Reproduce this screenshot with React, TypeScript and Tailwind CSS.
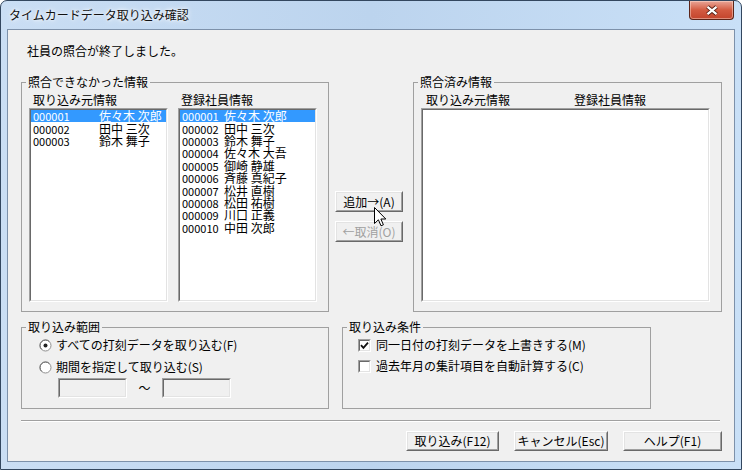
import React from 'react';

const unmatched = [
  ['000001', '佐々木 次郎'],
  ['000002', '田中 三次'],
  ['000003', '鈴木 舞子'],
];

const employees = [
  ['000001', '佐々木 次郎'],
  ['000002', '田中 三次'],
  ['000003', '鈴木 舞子'],
  ['000004', '佐々木 大吾'],
  ['000005', '御崎 静雄'],
  ['000006', '斉藤 真紀子'],
  ['000007', '松井 直樹'],
  ['000008', '松田 祐樹'],
  ['000009', '川口 正義'],
  ['000010', '中田 次郎'],
];

function Sunken({ className, inner, children }: { className: string; inner: string; children?: React.ReactNode }) {
  return (
    <div className={`border border-t-[#a0a0a0] border-l-[#a0a0a0] border-r-white border-b-white ${className}`}>
      <div className={`h-full border border-t-[#696969] border-l-[#696969] border-r-[#e3e3e3] border-b-[#e3e3e3] ${inner}`}>
        {children}
      </div>
    </div>
  );
}

function Btn({ label, className, disabled }: { label: string; className: string; disabled?: boolean }) {
  return (
    <div className={`border border-t-white border-l-white border-r-[#696969] border-b-[#696969] bg-[#f0f0f0] ${className}`}>
      <div
        className={`h-full flex items-center justify-center border border-t-[#e3e3e3] border-l-[#e3e3e3] border-r-[#a0a0a0] border-b-[#a0a0a0] ${
          disabled ? 'text-[#a0a0a0]' : 'text-black'
        }`}
      >
        {label}
      </div>
    </div>
  );
}

function Radio({ checked }: { checked?: boolean }) {
  return (
    <svg width="13" height="13" viewBox="0 0 13 13" className="shrink-0">
      <circle cx="6.5" cy="6.5" r="5.5" fill="#fff" stroke="#8f8f8f" />
      <path d="M2.6 10.4 A5.5 5.5 0 0 1 10.4 2.6" fill="none" stroke="#6a6a6a" />
      {checked && <circle cx="6.5" cy="6.5" r="2" fill="#222" />}
    </svg>
  );
}

function Check({ checked }: { checked?: boolean }) {
  return (
    <Sunken className="w-[13px] h-[13px] shrink-0" inner="bg-white flex items-center justify-center">
      {checked && (
        <svg width="9" height="9" viewBox="0 0 9 9">
          <path d="M1 4.2 L3.4 6.8 L8 1.6" fill="none" stroke="#111" strokeWidth="1.8" />
        </svg>
      )}
    </Sunken>
  );
}

function Row({ code, name, codeW, selected }: { code: string; name: string; codeW: string; selected?: boolean }) {
  return (
    <div className={`flex items-center h-[12.4px] leading-[12px] pl-[2px] whitespace-nowrap ${selected ? 'bg-[#3399ff] text-white' : ''}`}>
      <span className={`${codeW} shrink-0 text-[11px]`}>{code}</span>
      <span>{name}</span>
    </div>
  );
}

export default function App() {
  return (
    <div className="w-[742px] h-[470px] flex flex-col rounded-t-[7px] border border-[#33475f] bg-gradient-to-r from-[#cadef4] via-[#bcd4ee] to-[#c9e0f7] overflow-hidden font-['Noto_Sans_CJK_JP',sans-serif] text-[12px] leading-[12px] text-black">
      {/* title bar */}
      <div className="h-[28px] shrink-0 flex items-start justify-between">
        <div className="pl-[8px] pt-[7px] leading-[14px] text-[12px] text-[#111] [text-shadow:0_0_6px_#ffffff,0_0_3px_#ffffff]">
          タイムカードデータ取り込み確認
        </div>
        <div className="mr-[7px] w-[45px] h-[19px] rounded-b-[4px] border border-t-0 border-[#5b2418] bg-gradient-to-b from-[#e8a597] via-[#d35b41] to-[#c3442c] shadow-[inset_0_0_0_1px_rgba(255,230,220,0.45)] flex items-center justify-center">
          <svg width="14" height="11" viewBox="0 0 14 11">
            <path d="M2.5 1.8 L11.5 9.2 M11.5 1.8 L2.5 9.2" stroke="#4d1a10" strokeWidth="4" />
            <path d="M2.5 1.8 L11.5 9.2 M11.5 1.8 L2.5 9.2" stroke="#ffffff" strokeWidth="2.2" />
          </svg>
        </div>
      </div>

      {/* client area */}
      <div className="relative flex-1 ml-[6px] mr-[6px] mb-[7px] border border-[#7d91aa] bg-[#f0f0f0] flex flex-col">
        <div className="pt-[15px] pl-[19px]">社員の照合が終了しました。</div>

        <div className="mt-[19px] pl-[13px] flex items-start">
          <fieldset className="w-[308px] h-[236px] border border-[#a0a0a0]">
            <legend className="ml-[4px] px-[2px] leading-[12px]">照合できなかった情報</legend>
            <div className="mt-[6px] ml-[7px] flex gap-[10px]">
              <div className="flex flex-col">
                <div className="pl-[4px] h-[14px]">取り込み元情報</div>
                <Sunken className="w-[139px] h-[194px]" inner="bg-white">
                  {unmatched.map(([c, n], i) => (
                    <Row key={c} code={c} name={n} codeW="w-[66px]" selected={i === 0} />
                  ))}
                </Sunken>
              </div>
              <div className="flex flex-col">
                <div className="pl-[3px] h-[14px]">登録社員情報</div>
                <Sunken className="w-[139px] h-[194px]" inner="bg-white">
                  {employees.map(([c, n], i) => (
                    <Row key={c} code={c} name={n} codeW="w-[42px]" selected={i === 0} />
                  ))}
                </Sunken>
              </div>
            </div>
          </fieldset>

          <div className="ml-[6px] mt-[115px] flex flex-col gap-[9px]">
            <Btn label="追加→(A)" className="w-[68px] h-[21px]" />
            <Btn label="←取消(O)" className="w-[68px] h-[21px]" disabled />
          </div>

          <fieldset className="ml-[10px] w-[309px] h-[236px] border border-[#a0a0a0]">
            <legend className="ml-[4px] px-[2px] leading-[12px]">照合済み情報</legend>
            <div className="mt-[6px] ml-[7px] flex flex-col">
              <div className="flex h-[14px] pl-[5px]">
                <span className="w-[148px]">取り込み元情報</span>
                <span>登録社員情報</span>
              </div>
              <Sunken className="w-[289px] h-[194px]" inner="bg-white" />
            </div>
          </fieldset>
        </div>

        <div className="mt-[9px] pl-[13px] flex items-start gap-[13px]">
          <fieldset className="w-[308px] h-[88px] border border-[#a0a0a0]">
            <legend className="ml-[4px] px-[2px] leading-[12px]">取り込み範囲</legend>
            <div className="mt-[5px] ml-[17px] flex items-center gap-[4px] h-[14px]">
              <Radio checked />
              <span>すべての打刻データを取り込む(F)</span>
            </div>
            <div className="mt-[8px] ml-[17px] flex items-center gap-[4px] h-[14px]">
              <Radio />
              <span>期間を指定して取り込む(S)</span>
            </div>
            <div className="mt-[4px] ml-[36px] flex items-center">
              <Sunken className="w-[69px] h-[20px]" inner="bg-[#f0f0f0]" />
              <span className="w-[35px] text-center">〜</span>
              <Sunken className="w-[69px] h-[20px]" inner="bg-[#f0f0f0]" />
            </div>
          </fieldset>

          <fieldset className="w-[309px] h-[88px] border border-[#a0a0a0]">
            <legend className="ml-[4px] px-[2px] leading-[12px]">取り込み条件</legend>
            <div className="mt-[5px] ml-[15px] flex items-center gap-[5px] h-[14px]">
              <Check checked />
              <span>同一日付の打刻データを上書きする(M)</span>
            </div>
            <div className="mt-[7px] ml-[15px] flex items-center gap-[5px] h-[14px]">
              <Check />
              <span>過去年月の集計項目を自動計算する(C)</span>
            </div>
          </fieldset>
        </div>

        <div className="mt-[11px] ml-[13px] w-[699px] border-t border-t-[#a0a0a0] border-b border-b-white" />

        <div className="mt-[9px] flex justify-end pr-[12px] gap-[15px]">
          <Btn label="取り込み(F12)" className="w-[93px] h-[20px]" />
          <Btn label="キャンセル(Esc)" className="w-[94px] h-[20px]" />
          <Btn label="ヘルプ(F1)" className="w-[99px] h-[20px]" />
        </div>

        {/* mouse pointer */}
        <svg width="13" height="20" viewBox="0 0 13 20" className="absolute left-[366px] top-[177px]">
          <path
            d="M0.5 0.5 V16.5 L4.4 12.8 L7 18.8 L9.4 17.8 L6.9 12 H11.8 Z"
            fill="#ffffff"
            stroke="#000000"
            strokeWidth="1"
            strokeLinejoin="miter"
          />
        </svg>
      </div>
    </div>
  );
}
